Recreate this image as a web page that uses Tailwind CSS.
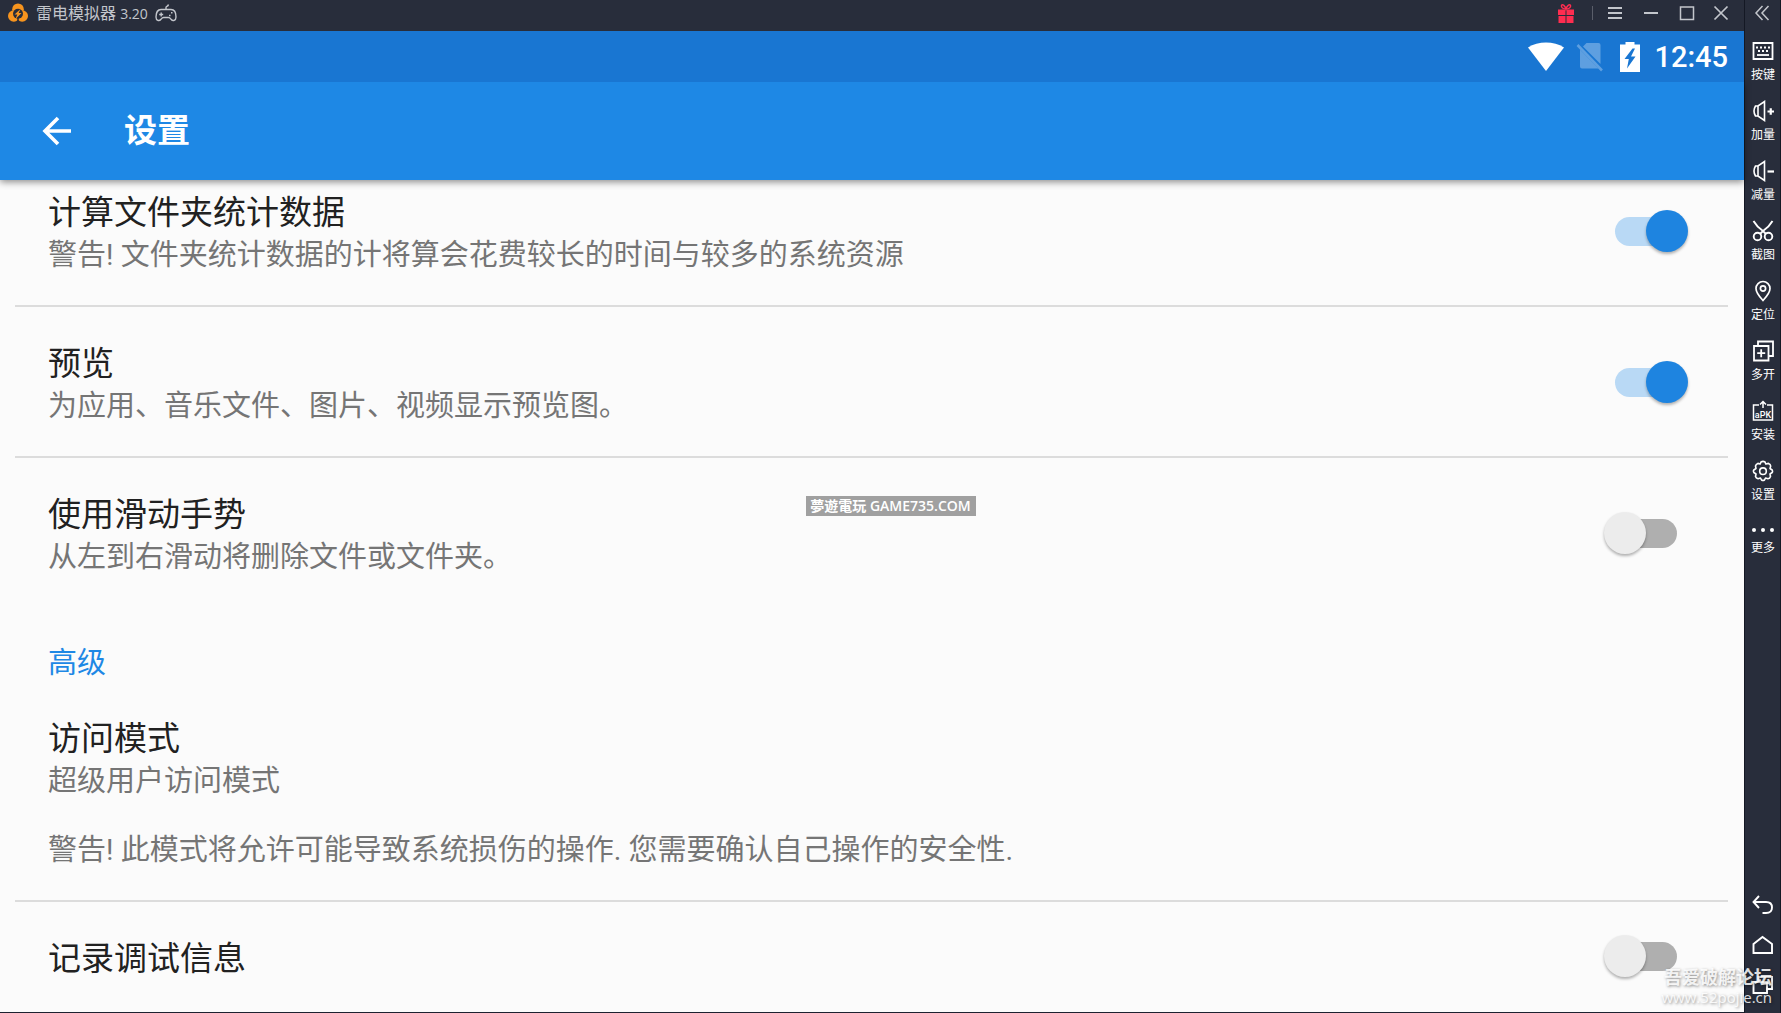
<!DOCTYPE html>
<html lang="zh-CN">
<head>
<meta charset="utf-8">
<title>雷电模拟器</title>
<script src="https://cdn.jsdelivr.net/npm/@tailwindcss/browser@4"></script>
</head>
<body class="relative flex h-screen overflow-hidden bg-[#282d3b] font-['Roboto','Noto_Sans_CJK_SC',sans-serif]">
<div class="flex min-w-0 flex-1 flex-col">
  <!-- Emulator title bar -->
  <header class="flex h-[31px] shrink-0 items-center pr-[15px] pb-[5px] pl-2 text-[#c3c6cc]">
    <svg class="mr-2 h-5 w-5" viewBox="0 0 20 20" fill="none">
      <circle cx="10" cy="6.200" r="5.800" fill="#f7941e"/><circle cx="5.800" cy="13" r="5.800" fill="#f7941e"/><circle cx="14.200" cy="13" r="5.800" fill="#f7941e"/>
      <circle cx="10" cy="10.800" r="5" fill="#282d3b"/><path d="M10 15v5" stroke="#282d3b" stroke-width="1.500"/>
      <path d="M12.500 6 6.500 11.500h2.800L7.500 16l6-6h-2.800z" fill="#f7941e"/>
    </svg>
    <h1 class="font-['Open_Sans','Noto_Sans_CJK_SC',sans-serif] text-base leading-6">雷电模拟器 <span class="text-sm">3.20</span></h1>
    <svg class="ml-[6px] h-5 w-6" viewBox="0 0 24 20" fill="none" stroke="currentColor" stroke-width="1.400">
      <path d="M7 6.500h10c3 0 5 3 5 7.500 0 3.500-3 4.500-5 2.200-1-1.200-1.400-1.700-2.500-1.700h-5c-1.100 0-1.500.5-2.500 1.700C5 18.500 2 17.500 2 14c0-4.500 2-7.500 5-7.500zM12 6.500V4.500c0-1.500 2-.5 2.500-3"/>
      <path d="M5.200 11.500h4M7.200 9.500v4M17 9.800h1.500M15 12.500h1.500"/>
    </svg>
    <div class="ml-auto flex items-center">
      <button aria-label="礼包" class="mr-[17px]"><svg class="h-5 w-[18px]" viewBox="0 0 18 20" fill="#ff2d50"><path d="M1 6.500h7.500V12H1zM9.500 6.500H17V12H9.500zM1.500 13h7v7h-7zM9.500 13h7v7h-7z"/><path d="M9 6C6 6 4 4.500 4.500 2.500S8 2.500 9 6c1-3.500 4-5.500 4.500-3.500S12 6 9 6z" fill="none" stroke="#ff2d50" stroke-width="1.500"/></svg></button>
      <span class="mr-[14px] h-[14px] w-px bg-[#5a5e6a]"></span>
      <button aria-label="菜单" class="mr-5"><svg class="h-4 w-4" viewBox="0 0 16 16" stroke="currentColor" stroke-width="2"><path d="M1 3h14M1 8h14M1 13h14"/></svg></button>
      <button aria-label="最小化" class="mr-5"><svg class="h-4 w-4" viewBox="0 0 16 16" stroke="currentColor" stroke-width="2"><path d="M1 8h14"/></svg></button>
      <button aria-label="最大化" class="mr-[18px]"><svg class="h-4 w-4" viewBox="0 0 16 16" fill="none" stroke="currentColor" stroke-width="1.500"><path d="M1.500 2h13v12.500h-13z"/></svg></button>
      <button aria-label="关闭"><svg class="h-4 w-4" viewBox="0 0 16 16" stroke="currentColor" stroke-width="1.700"><path d="m1.500 1.500 13 13M14.500 1.500l-13 13"/></svg></button>
    </div>
  </header>

  <!-- Android status bar -->
  <div class="relative z-10 flex h-[51px] shrink-0 items-center justify-end bg-[#1976d2] pr-4 text-white">
    <svg class="mr-3 h-[30px] w-9" viewBox="0 0 36 30" fill="#fff"><path d="M0 5.500C10-1.300 26-1.300 36 5.500L18 29z"/></svg>
    <svg class="mr-4 h-[30px] w-7" viewBox="0 0 28 30"><path d="M10.500 1H22.500q2 0 2 2v19L7 4.500zM4 7.500 22.500 26.500H6q-2 0-2-2z" fill="#5e9fe0"/><path d="m1.500 3 24.500 25.500" stroke="#5e9fe0" stroke-width="2.600"/></svg>
    <svg class="mr-[14px] h-[30px] w-5" viewBox="0 0 20 30"><path d="M5.500 0h9v2.500H20V30H0V2.500h5.500z" fill="#fff"/><path d="M12.500 6.500 4.500 17h4.300L7 26.500 15.500 14.500h-4.500L15 6.500z" fill="#1976d2"/></svg>
    <time class="text-[29px] leading-8 font-medium">12:45</time>
  </div>

  <!-- App bar -->
  <div class="relative flex h-[98px] shrink-0 items-center bg-[#1e88e5] pl-10 text-white shadow-[0_2px_7px_rgba(0,0,0,0.45)]">
    <button aria-label="返回"><svg class="h-8 w-8" viewBox="0 0 32 32" fill="none" stroke="#fff" stroke-width="3.600"><path d="M31 16H5M18 3 5 16l13 13"/></svg></button>
    <h2 class="ml-[52px] text-[33px] leading-[44px] font-bold">设置</h2>
  </div>

  <!-- Preferences -->
  <main class="min-h-0 flex-1 overflow-hidden border-b border-[#1d2130] bg-[#fbfbfb] pr-4 pl-[15px] text-[29px] leading-[42px] text-[#757575]">
    <label class="flex items-center justify-between border-b-2 border-[#dcdcdc] pt-3 pr-10 pb-[29px] pl-[33px]">
      <span><span class="block text-[33px] text-[#212121]">计算文件夹统计数据</span><span class="block">警告! 文件夹统计数据的计将算会花费较长的时间与较多的系统资源</span></span>
      <input type="checkbox" role="switch" checked class="relative mb-[6px] h-[42px] w-[84px] shrink-0 appearance-none before:absolute before:inset-x-[11px] before:top-[7px] before:h-[29px] before:rounded-full before:bg-[#afafaf] after:absolute after:top-0 after:left-0 after:h-[42px] after:w-[42px] after:rounded-full after:bg-[#ececec] after:shadow-[0_2px_3px_rgba(0,0,0,0.3)] checked:before:bg-[#b9d9f5] checked:after:left-[42px] checked:after:bg-[#1e84e0]">
    </label>
    <label class="flex items-center justify-between border-b-2 border-[#dcdcdc] pt-9 pr-10 pb-[29px] pl-[33px]">
      <span><span class="block text-[33px] text-[#212121]">预览</span><span class="block">为应用、音乐文件、图片、视频显示预览图。</span></span>
      <input type="checkbox" role="switch" checked class="relative mb-[6px] h-[42px] w-[84px] shrink-0 appearance-none before:absolute before:inset-x-[11px] before:top-[7px] before:h-[29px] before:rounded-full before:bg-[#afafaf] after:absolute after:top-0 after:left-0 after:h-[42px] after:w-[42px] after:rounded-full after:bg-[#ececec] after:shadow-[0_2px_3px_rgba(0,0,0,0.3)] checked:before:bg-[#b9d9f5] checked:after:left-[42px] checked:after:bg-[#1e84e0]">
    </label>
    <label class="flex items-center justify-between pt-9 pr-10 pb-[29px] pl-[33px]">
      <span><span class="block text-[33px] text-[#212121]">使用滑动手势</span><span class="block">从左到右滑动将删除文件或文件夹。</span></span>
      <input type="checkbox" role="switch" class="relative mb-[6px] h-[42px] w-[84px] shrink-0 appearance-none before:absolute before:inset-x-[11px] before:top-[7px] before:h-[29px] before:rounded-full before:bg-[#afafaf] after:absolute after:top-0 after:left-0 after:h-[42px] after:w-[42px] after:rounded-full after:bg-[#ececec] after:shadow-[0_2px_3px_rgba(0,0,0,0.3)] checked:before:bg-[#b9d9f5] checked:after:left-[42px] checked:after:bg-[#1e84e0]">
    </label>
    <h3 class="pt-[35px] pl-[33px] text-[#1e88e5]">高级</h3>
    <section class="border-b-2 border-[#dcdcdc] pt-[34px] pr-10 pb-[29px] pl-[33px]">
      <h4 class="text-[33px] text-[#212121]">访问模式</h4>
      <p>超级用户访问模式</p>
      <p class="mt-[27px]">警告! 此模式将允许可能导致系统损伤的操作. 您需要确认自己操作的安全性.</p>
    </section>
    <label class="flex items-center justify-between pt-[33px] pr-10 pb-[29px] pl-[33px]">
      <span class="text-[33px] text-[#212121]">记录调试信息</span>
      <input type="checkbox" role="switch" class="relative mb-[6px] h-[42px] w-[84px] shrink-0 appearance-none before:absolute before:inset-x-[11px] before:top-[7px] before:h-[29px] before:rounded-full before:bg-[#afafaf] after:absolute after:top-0 after:left-0 after:h-[42px] after:w-[42px] after:rounded-full after:bg-[#ececec] after:shadow-[0_2px_3px_rgba(0,0,0,0.3)] checked:before:bg-[#b9d9f5] checked:after:left-[42px] checked:after:bg-[#1e84e0]">
    </label>
  </main>
</div>

<!-- Emulator tool strip -->
<nav class="flex w-[37px] shrink-0 flex-col items-center border-x border-[#141824] pl-px text-xs leading-4 text-white">
  <button aria-label="收起" class="flex h-[26px] items-center pr-[2px] text-[#c3c6cc]"><svg class="h-4 w-4" viewBox="0 0 16 16" fill="none" stroke="currentColor" stroke-width="1.500"><path d="M8.500 1 2 8l6.500 7M14.500 1 8 8l6.500 7"/></svg></button>
  <div class="flex flex-col items-center gap-4 pt-[14px]">
    <button class="flex h-11 flex-col items-center gap-[5px]"><svg class="h-[22px] w-[22px]" viewBox="0 0 22 22" fill="none" stroke="#fff" stroke-width="1.800"><path d="M1.500 3h19v16h-19z"/><path d="M4 7.500h14" stroke-width="2" stroke-dasharray="2 2"/><path d="M6 11h11" stroke-width="2" stroke-dasharray="2 2"/><path d="M5 15h12"/></svg><span>按键</span></button>
    <button class="flex h-11 flex-col items-center gap-[5px]"><svg class="h-[22px] w-[22px]" viewBox="0 0 22 22" fill="none" stroke="#fff" stroke-width="1.600"><path d="M6 6H3.500Q.5 11 3.500 16H6l6.500 4.500v-19zM6 6v10"/><path d="M15.500 11.500H22M18.750 8.200v6.600" stroke-width="2.200"/></svg><span>加量</span></button>
    <button class="flex h-11 flex-col items-center gap-[5px]"><svg class="h-[22px] w-[22px]" viewBox="0 0 22 22" fill="none" stroke="#fff" stroke-width="1.600"><path d="M6 6H3.500Q.5 11 3.500 16H6l6.500 4.500v-19zM6 6v10"/><path d="M15.500 11.500H22" stroke-width="2.200"/></svg><span>减量</span></button>
    <button class="flex h-11 flex-col items-center gap-[5px]"><svg class="h-[22px] w-[22px]" viewBox="0 0 22 22" fill="none" stroke="#fff" stroke-width="1.900"><circle cx="5.500" cy="16.500" r="3.800"/><circle cx="16.500" cy="16.500" r="3.800"/><path d="M1.500 1Q5 7 11 11l3 3M20.500 1Q17 7 11 11l-3 3"/></svg><span>截图</span></button>
    <button class="flex h-11 flex-col items-center gap-[5px]"><svg class="h-[22px] w-[22px]" viewBox="0 0 22 22" fill="none" stroke="#fff" stroke-width="1.700"><path d="M11 20.500Q4 13 4 8.500a7 7 0 0 1 14 0Q18 13 11 20.500z"/><circle cx="11" cy="8.500" r="2.600"/></svg><span>定位</span></button>
    <button class="flex h-11 flex-col items-center gap-[5px]"><svg class="h-[22px] w-[22px]" viewBox="0 0 22 22" fill="none" stroke="#fff" stroke-width="1.800"><path d="M2 6h14.500v14.500H2zM6 6V1.500h15V16h-4.500M5.200 13.200h8M9.200 9.200v8"/></svg><span>多开</span></button>
    <button class="flex h-11 flex-col items-center gap-[5px]"><svg class="h-[22px] w-[22px]" viewBox="0 0 22 22" fill="none" stroke="#fff" stroke-width="1.500"><path d="M7 5H1.500v15h19V5H15M11 8V1.500M8 4.500l3-3 3 3"/><text x="11" y="17.500" text-anchor="middle" fill="#fff" stroke="none" class="text-[9px] font-medium">aPK</text></svg><span>安装</span></button>
    <button class="flex h-11 flex-col items-center gap-[5px]"><svg class="h-[22px] w-[22px]" viewBox="0 0 22 22" fill="none" stroke="#fff" stroke-width="1.600" stroke-linejoin="round"><path d="M9 2q2-1.200 4 0l.8 2 2.700-.6q2 .9 2.200 2.600L18 8.500l2.200 1.500q.7 1.500 0 2.500L18 14l.5 2.500q-.6 2-2.500 2.200l-2.500-.7-1 2q-1.500.8-3 0l-1-2-2.500.7q-2-.4-2.500-2.200L4 14l-2.200-1.500q-.7-1.500 0-2.500L4 8.500 3.500 6Q4 4 5.800 3.400L8.200 4z"/><circle cx="11" cy="11.200" r="3.300"/></svg><span>设置</span></button>
    <button class="flex h-9 flex-col items-center"><svg class="h-[20px] w-[22px]" viewBox="0 0 22 20" fill="#fff"><circle cx="2" cy="10" r="2"/><circle cx="11" cy="10" r="2"/><circle cx="20" cy="10" r="2"/></svg><span>更多</span></button>
  </div>
  <div class="mt-auto flex flex-col gap-[18px] pr-px pb-[17px]">
    <button aria-label="返回"><svg class="block h-[22px] w-[22px]" viewBox="0 0 22 22" fill="none" stroke="#fff" stroke-width="1.900"><path d="M7 2 1.500 8 7 14M1.500 8H14q6 0 6 5.500t-6 5.500h-3.500"/></svg></button>
    <button aria-label="主页"><svg class="block h-[22px] w-[22px]" viewBox="0 0 22 22" fill="none" stroke="#fff" stroke-width="1.900"><path d="M1.500 19V10l9-7 9.500 7v9z"/></svg></button>
    <button aria-label="最近任务"><svg class="block h-[22px] w-[22px]" viewBox="0 0 22 22" fill="none" stroke="#fff" stroke-width="1.900"><path d="M1.500 8H15v11H1.500zM6.500 8V3H20v12h-5"/></svg></button>
  </div>
</nav>

<!-- Watermarks -->
<div class="absolute top-[496px] left-1/2 flex h-5 w-[170px] -translate-x-1/2 items-center justify-center bg-[#a0a0a0] font-['Open_Sans','Noto_Sans_CJK_TC',sans-serif] text-sm leading-5 font-semibold whitespace-nowrap text-white">夢遊電玩 GAME735.COM</div>
<div class="absolute right-[9px] bottom-[6px] z-20 text-right font-['Open_Sans','Noto_Sans_CJK_SC',sans-serif] whitespace-nowrap text-white/85 [text-shadow:1px_1px_3px_rgba(0,0,0,0.45)]">
  <p class="text-lg leading-5 font-bold">吾爱破解论坛</p>
  <p class="text-[15px] leading-5 font-medium">www.52pojie.cn</p>
</div>
</body>
</html>
